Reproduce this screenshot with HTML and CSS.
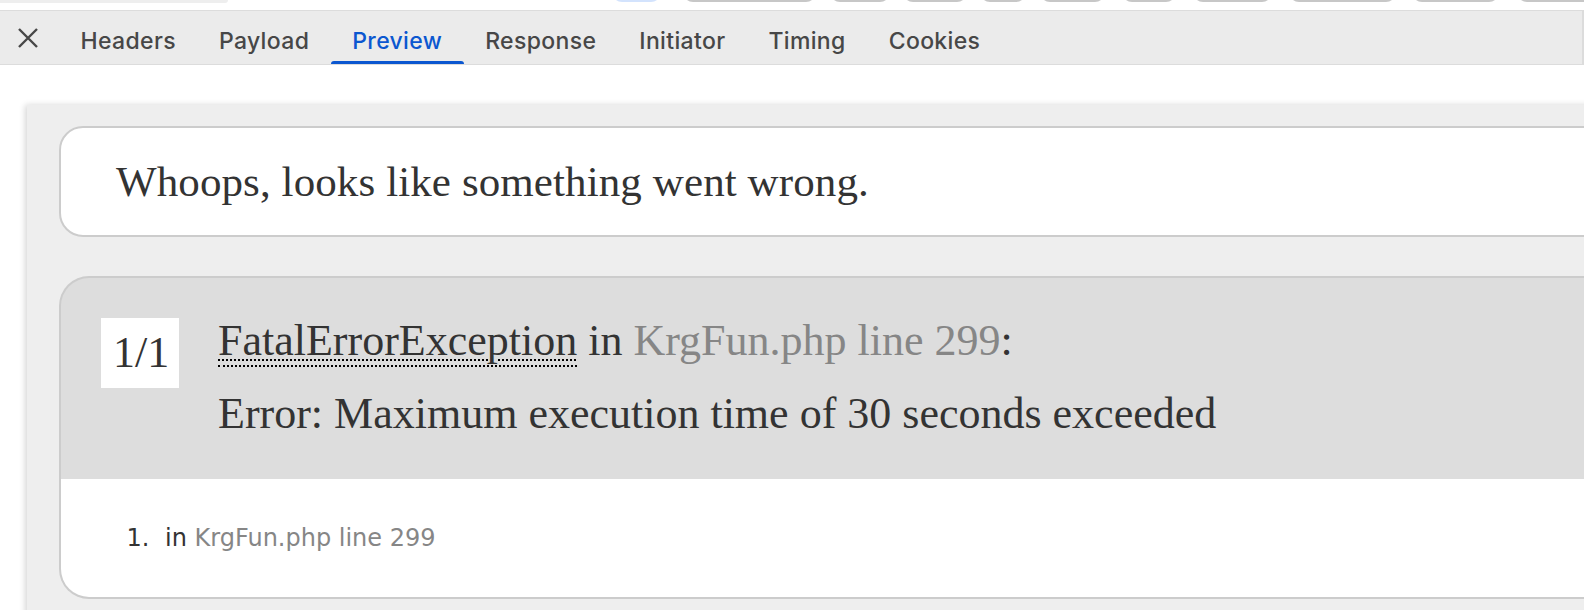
FILE: index.html
```html
<!DOCTYPE html>
<html>
<head>
<meta charset="utf-8">
<title>Preview</title>
<link rel="stylesheet" href="styles.css">
</head>
<body>
<div class="app">
  <div class="topstrip">
    <div class="search-stub"></div>
    <div class="btn-row">
      <span class="tb tb-blue"></span>
      <span class="tb w1"></span>
      <span class="tb w2"></span>
      <span class="tb w3"></span>
      <span class="tb w4"></span>
      <span class="tb w5"></span>
      <span class="tb w6"></span>
      <span class="tb w7"></span>
      <span class="tb w8"></span>
      <span class="tb w9"></span>
      <span class="tb w10"></span>
    </div>
  </div>
  <div class="tabbar">
    <div class="close">
      <svg width="22" height="22" viewBox="0 0 22 22"><path d="M2 2 L20 20 M20 2 L2 20" stroke="#474747" stroke-width="2.4" fill="none" stroke-linecap="butt"/></svg>
    </div>
    <div class="tabs">
      <div class="tab">Headers</div>
      <div class="tab">Payload</div>
      <div class="tab active">Preview</div>
      <div class="tab">Response</div>
      <div class="tab">Initiator</div>
      <div class="tab">Timing</div>
      <div class="tab">Cookies</div>
    </div>
  </div>
  <div class="content">
    <div class="frame">
      <h1 class="whoops">Whoops, looks like something went wrong.</h1>
      <div class="block-exception">
        <span class="counter">1/1</span>
        <span class="exc-title"><abbr title="Symfony\Component\Debug\Exception\FatalErrorException">FatalErrorException</abbr> in <a class="file">KrgFun.php line 299</a>:</span>
        <span class="exc-message">Error: Maximum execution time of 30 seconds exceeded</span>
      </div>
      <div class="block">
        <ol class="traces">
          <li>in <a class="file">KrgFun.php line 299</a></li>
        </ol>
      </div>
    </div>
  </div>
</div>
</body>
</html>
```
FILE: styles.css
```css
html, body {
  margin: 0;
  padding: 0;
  background: #ffffff;
}
.app {
  width: 1584px;
  height: 610px;
  overflow: hidden;
  background: #ffffff;
}
.topstrip {
  height: 10px;
  overflow: hidden;
  display: flex;
  background: #ffffff;
}
.search-stub {
  width: 228px;
  height: 3px;
  background: #eeeeee;
  border-bottom-right-radius: 10px;
  flex: none;
}
.btn-row {
  display: flex;
  margin-top: -30px;
  margin-left: 384px;
}
.tb {
  flex: none;
  height: 28px;
  border: 2px solid #c7c7c7;
  border-radius: 10px;
  margin-left: 14px;
}
.tb-blue { width: 45px; background: #d3e3fd; border-color: #d3e3fd; margin-left: 0; }
.w1 { width: 129px; margin-left: 22px; }
.w2 { width: 56px; margin-left: 14px; }
.w3 { width: 60px; margin-left: 13px; }
.w4 { width: 42px; margin-left: 13px; }
.w5 { width: 61px; margin-left: 14px; }
.w6 { width: 50px; margin-left: 17px; }
.w7 { width: 75px; margin-left: 17px; }
.w8 { width: 103px; margin-left: 17px; }
.w9 { width: 83px; margin-left: 16px; }
.w10 { width: 90px; margin-left: 18px; }

.tabbar {
  height: 53px;
  border-top: 1px solid #dcdcdc;
  border-bottom: 1px solid #dcdcdc;
  border-right: 2px solid #dcdcdc;
  background: #ebebeb;
  display: flex;
  align-items: stretch;
  box-sizing: content-box;
  width: 1582px;
}
.close {
  width: 56px;
  flex: none;
  display: flex;
  align-items: center;
  justify-content: center;
}
.tabs {
  display: flex;
  margin-left: 3px;
}
.tab {
  font-family: Inter, "Noto Sans", sans-serif;
  font-size: 23px;
  font-weight: 500;
  letter-spacing: 0.35px;
  color: #474747;
  padding: 0 21.5px;
  display: flex;
  align-items: center;
  padding-top: 6px;
  position: relative;
}
.tab.active {
  color: #0b57d0;
}
.tab.active::after {
  content: "";
  position: absolute;
  left: 0;
  right: 0;
  bottom: 0;
  height: 3px;
  background: #0b57d0;
  border-radius: 3px 3px 0 0;
}

.content {
  padding: 40px 0 0 27px;
  background: #ffffff;
}
.frame {
  width: 2000px;
  height: 600px;
  background: #eeeeee;
  padding: 21px 0 0 32px;
  box-shadow: -2px 0 6px rgba(0, 0, 0, 0.16);
  color: #333333;
  font-family: "DejaVu Sans", Verdana, sans-serif;
}
.whoops {
  margin: 0 0 39px 0;
  width: 1900px;
  background: #ffffff;
  border: 2px solid #cccccc;
  border-radius: 24px;
  padding: 32px 55px 31px;
  font-family: "Liberation Serif", Georgia, serif;
  font-weight: normal;
  font-size: 43px;
  line-height: 44px;
  letter-spacing: 0.1px;
  color: #333333;
}
.block-exception {
  width: 1900px;
  background: #dddddd;
  border: 2px solid #cccccc;
  border-bottom: none;
  border-radius: 30px 30px 0 0;
  padding: 40px 40px 42px 40px;
  font-family: "Liberation Serif", Georgia, serif;
  font-size: 44px;
  line-height: 46px;
  color: #333333;
  overflow: hidden;
}
.counter {
  float: left;
  background: #ffffff;
  padding: 12px 10px 12px 12px;
  margin-right: 20px;
}
.exc-title {
  display: block;
  margin-left: 117px;
  margin-bottom: 27px;
}
.exc-message {
  display: block;
  margin-left: 117px;
}
abbr {
  text-decoration: underline dotted #000;
  text-decoration-thickness: 2px;
  text-underline-offset: 4px;
  border-bottom: 2px dotted #000;
}
.file {
  color: #868686;
  text-decoration: none;
}
.block {
  width: 1900px;
  background: #ffffff;
  border: 2px solid #cccccc;
  border-top: none;
  border-radius: 0 0 30px 30px;
  padding: 20px 56px;
}
.traces {
  margin: 21px 0;
  padding: 0;
  font-size: 24px;
  line-height: 28px;
  color: #333333;
}
.traces li {
  margin-left: 40px;
  padding: 4px 8px;
  list-style-type: decimal;
}
```
